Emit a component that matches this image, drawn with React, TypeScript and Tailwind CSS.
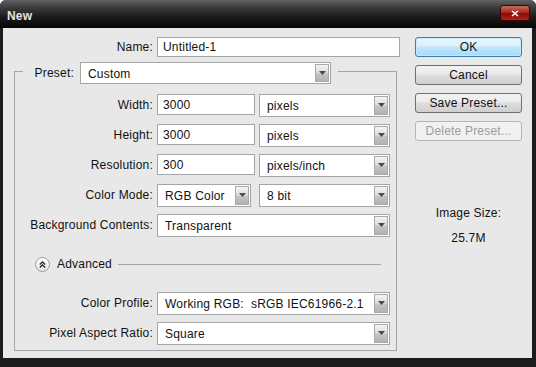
import type { ReactNode } from "react";

const font = { fontFamily: '"Liberation Sans", Arial, sans-serif' };

function Arrow() {
  return (
    <span className="flex h-full w-[14px] shrink-0 items-start justify-center border border-[#a9a9a9] bg-[linear-gradient(to_bottom,#f6f6f6,#dcdcdc_45%,#c4c4c4_55%,#b2b2b2)] pt-[6px]">
      <svg width="7" height="4" viewBox="0 0 7 4">
        <path d="M0 0h7L3.5 4z" fill="#4b4b4b" />
      </svg>
    </span>
  );
}

function Select({ className, children }: { className: string; children: ReactNode }) {
  return (
    <div className={`flex items-stretch border border-[#a5a5a5] bg-white p-px ${className}`}>
      <span className="flex flex-1 items-center whitespace-pre pl-[6px] pt-px">{children}</span>
      <Arrow />
    </div>
  );
}

function Field({ value }: { value: string }) {
  return (
    <div className="flex h-[21px] w-[98px] items-center border border-[#a5a5a5] bg-white pl-[5px]">
      {value}
    </div>
  );
}

function Row({ label, children }: { label: string; children: ReactNode }) {
  return (
    <div className="flex h-[23px] items-start">
      <span className="flex h-[21px] w-[138px] items-center justify-end">{label}</span>
      <div className="ml-[4px] flex items-start">{children}</div>
    </div>
  );
}

function Button({ children, kind = "normal" }: { children: ReactNode; kind?: "default" | "normal" | "disabled" }) {
  const look =
    kind === "default"
      ? "border-[#3c7fb1] bg-[linear-gradient(to_bottom,#eaf6fd,#d9f0fc_45%,#bee6fd_50%,#a7d9f5)] shadow-[inset_0_0_0_1px_#c8e8fa]"
      : kind === "disabled"
        ? "border-[#b5b5b5] bg-[#f1f1f1] text-[#9c9c9c]"
        : "border-[#707070] bg-[linear-gradient(to_bottom,#f2f2f2,#ebebeb_45%,#dddddd_50%,#cfcfcf)]";
  return (
    <div className={`flex h-[20px] w-[107px] items-center justify-center rounded-[3px] border ${look}`}>
      {children}
    </div>
  );
}

export default function App() {
  return (
    <div className="h-[367px] w-[536px] bg-white text-[12px] tracking-[0.2px] text-[#111]" style={font}>
      <div className="flex h-full w-full flex-col overflow-hidden rounded-t-[6px] bg-[#1c1c1c]">
        {/* title bar */}
        <div className="flex h-[28px] shrink-0 items-start justify-between bg-[linear-gradient(to_bottom,#626262,#3e3e3e_25%,#1c1c1c_60%,#050505)] pt-[5px]">
          <span className="ml-[7px] mt-[2px] text-[12px] font-bold text-[#e4e4e4]">New</span>
          <div className="mr-[6px] flex h-[16px] w-[30px] items-center justify-center rounded-[3px] border border-[#3d0303] bg-[linear-gradient(to_bottom,#c86a62,#a82a20_45%,#8a0c06_55%,#b0241a)]">
            <svg width="8" height="7" viewBox="0 0 8 7">
              <path d="M1 1l6 5M7 1L1 6" stroke="#fff" strokeWidth="1.6" />
            </svg>
          </div>
        </div>

        {/* client area */}
        <div className="mb-[9px] ml-[3px] mr-[4px] flex flex-1 bg-[#e8e8e8] pt-[9px]">
          <div className="w-[397px]">
            <div className="flex h-[20px] items-center">
              <span className="w-[150px] text-right">Name:</span>
              <div className="ml-[4px] flex h-[20px] w-[243px] items-center border border-[#a5a5a5] bg-white pl-[5px]">
                Untitled-1
              </div>
            </div>

            <fieldset className="ml-[11px] mt-px w-[383px] border border-[#a5a5a5]">
              <legend className="ml-[8px] flex items-center pr-[7px] pt-[4px]">
                <span className="w-[57px] pr-[6px] text-right">Preset:</span>
                <Select className="h-[22px] w-[251px]">Custom</Select>
              </legend>

              <div className="flex flex-col pb-[5px] pt-[10px]">
                <div className="flex flex-col gap-[7px]">
                  <Row label="Width:">
                    <Field value="3000" />
                    <Select className="ml-[4px] h-[23px] w-[131px]">pixels</Select>
                  </Row>
                  <Row label="Height:">
                    <Field value="3000" />
                    <Select className="ml-[4px] h-[23px] w-[131px]">pixels</Select>
                  </Row>
                  <Row label="Resolution:">
                    <Field value="300" />
                    <Select className="ml-[4px] h-[23px] w-[131px]">pixels/inch</Select>
                  </Row>
                  <Row label="Color Mode:">
                    <Select className="h-[23px] w-[94px]">RGB Color</Select>
                    <Select className="ml-[8px] h-[23px] w-[131px]">8 bit</Select>
                  </Row>
                  <Row label="Background Contents:">
                    <Select className="h-[23px] w-[233px]">Transparent</Select>
                  </Row>
                </div>

                <div className="mr-[15px] mt-[19px] flex h-[16px] items-center pl-[20px]">
                  <span className="flex h-[15px] w-[15px] items-center justify-center rounded-full border border-[#9d9d9d] bg-[linear-gradient(to_bottom,#ffffff,#e4e4e4)]">
                    <svg width="7" height="7" viewBox="0 0 7 7">
                      <path d="M0.8 3.4L3.5 0.9L6.2 3.4M0.8 6.4L3.5 3.9L6.2 6.4" fill="none" stroke="#2a2a2a" strokeWidth="1.3" />
                    </svg>
                  </span>
                  <span className="ml-[7px]">Advanced</span>
                  <span className="ml-[6px] h-px flex-1 bg-[#a5a5a5]" />
                </div>

                <div className="mt-[20px] flex flex-col gap-[7px]">
                  <Row label="Color Profile:">
                    <Select className="h-[23px] w-[233px]">{"Working RGB:  sRGB IEC61966-2.1"}</Select>
                  </Row>
                  <Row label="Pixel Aspect Ratio:">
                    <Select className="h-[23px] w-[233px]">Square</Select>
                  </Row>
                </div>
              </div>
            </fieldset>
          </div>

          <div className="ml-[15px] flex w-[107px] flex-col">
            <div className="flex flex-col gap-[8px]">
              <Button kind="default">OK</Button>
              <Button>Cancel</Button>
              <Button>Save Preset...</Button>
              <Button kind="disabled">Delete Preset...</Button>
            </div>
            <div className="mt-[65px] text-center leading-[14px]">Image Size:</div>
            <div className="mt-[11px] text-center leading-[14px]">25.7M</div>
          </div>
        </div>
      </div>
    </div>
  );
}
